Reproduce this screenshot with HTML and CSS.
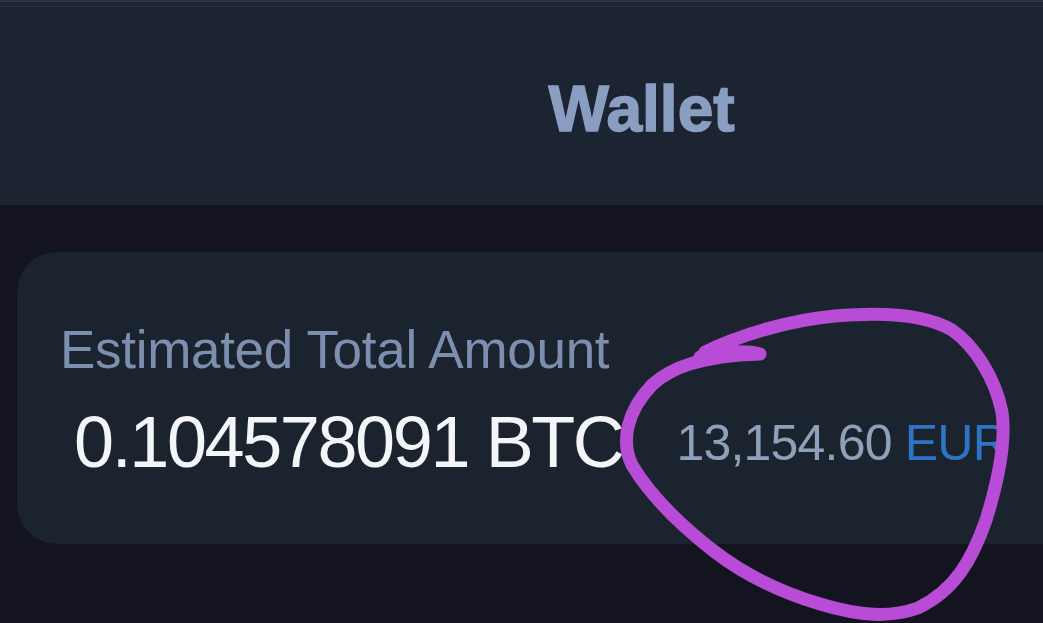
FILE: index.html
```html
<!DOCTYPE html>
<html>
<head>
<meta charset="utf-8">
<link rel="stylesheet" href="styles.css">
</head>
<body>
<div class="screen">
  <header class="topbar">
    <h1 class="title">Wallet</h1>
  </header>
  <section class="card">
    <div class="label">Estimated Total Amount</div>
    <div class="amounts">
      <span class="btc">0.104578091 BTC</span>
      <span class="fiat">13,154.60 <span class="cur">EUR</span></span>
    </div>
  </section>
  <svg class="scribble" width="1043" height="623" viewBox="0 0 1043 623">
    <path d="M700 357 C 720 352, 745 350, 760 354 M 705 352 C 740 335, 790 320, 835 316 C 880 312, 925 314, 952 330 C 975 346, 995 378, 1002 412 C 1006 440, 1000 475, 986 520 C 972 560, 955 590, 918 608 C 890 618, 860 616, 820 604 C 780 592, 745 575, 715 552 C 680 525, 650 495, 632 465 C 620 440, 628 410, 652 385 C 670 368, 700 356, 760 354"
      fill="none" stroke="#b94cd6" stroke-width="13" stroke-linecap="round" stroke-linejoin="round"/>
  </svg>
</div>
</body>
</html>
```
FILE: styles.css
```css
html, body {
  margin: 0;
  padding: 0;
  background: #141421;
  overflow: hidden;
}
.screen {
  position: relative;
  width: 1043px;
  height: 623px;
  overflow: hidden;
  font-family: "Liberation Sans", Arial, sans-serif;
}
.topbar {
  height: 205px;
  box-sizing: border-box;
  background: #1b2430;
  border-top: 2px solid #2a3441;
  box-shadow: inset 0 4px 0 #1b2430, inset 0 5px 0 #2a3441;
  display: flex;
  align-items: center;
  justify-content: center;
  padding: 10px 0 0 240px;
}
.title {
  margin: 0;
  font-size: 64px;
  font-weight: 700;
  color: #8a9ec2;
  -webkit-text-stroke: 1.5px #8a9ec2;
}
.card {
  margin: 47px -80px 0 17px;
  background: #1a232e;
  border-radius: 40px;
  padding: 67px 0 60px 43px;
}
.label {
  font-size: 53px;
  line-height: 61px;
  color: #7d8fae;
  letter-spacing: -0.3px;
}
.amounts {
  margin-top: 21px;
  margin-left: 14px;
  display: flex;
  align-items: center;
  gap: 54px;
}
.btc {
  font-size: 72px;
  line-height: 83px;
  color: #f3f5f8;
  letter-spacing: -2.4px;
}
.fiat {
  font-size: 50px;
  line-height: 58px;
  color: #8fa0ba;
  letter-spacing: -0.8px;
}
.cur {
  color: #2e74c4;
}
.scribble {
  position: absolute;
  left: 0;
  top: 0;
  pointer-events: none;
}
```
